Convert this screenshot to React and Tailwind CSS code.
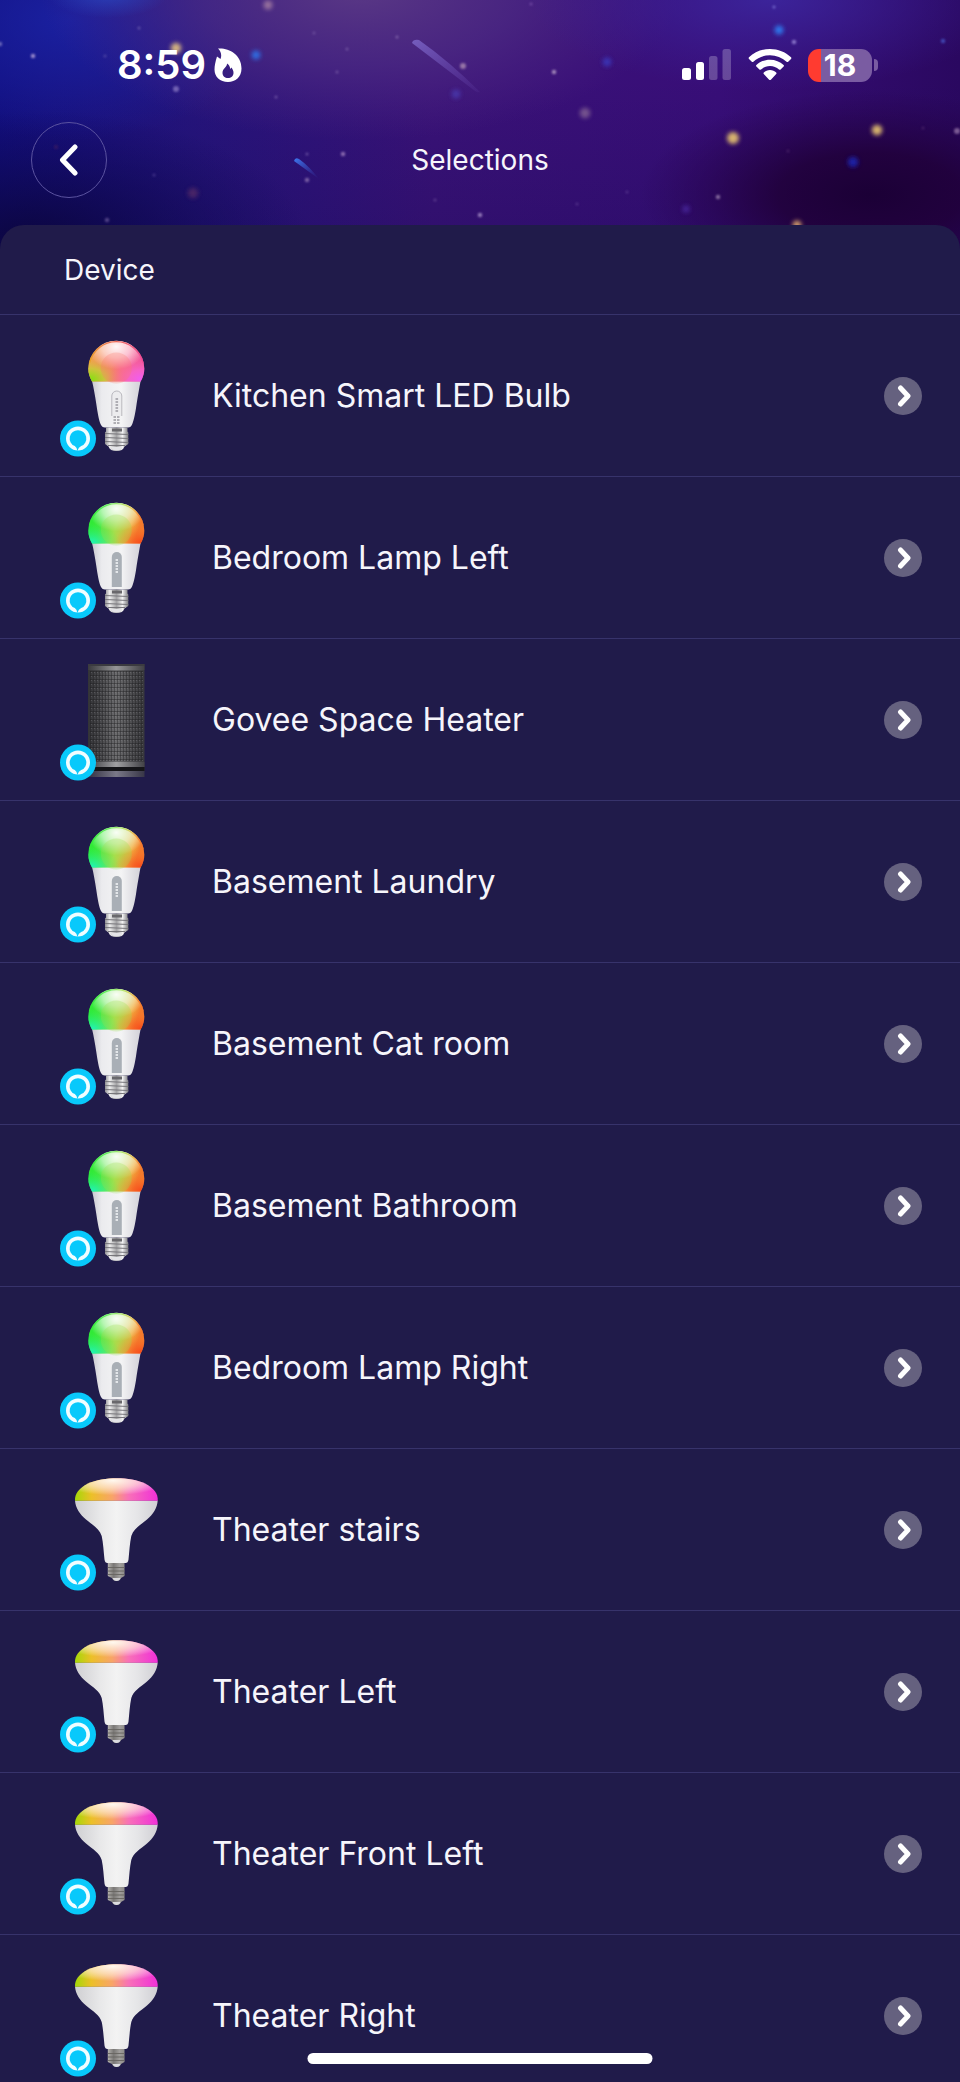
import React from "react";

const devices = [
  { name: "Kitchen Smart LED Bulb", kind: "pink" },
  { name: "Bedroom Lamp Left", kind: "green" },
  { name: "Govee Space Heater", kind: "heater" },
  { name: "Basement Laundry", kind: "green" },
  { name: "Basement Cat room", kind: "green" },
  { name: "Basement Bathroom", kind: "green" },
  { name: "Bedroom Lamp Right", kind: "green" },
  { name: "Theater stairs", kind: "flood" },
  { name: "Theater Left", kind: "flood" },
  { name: "Theater Front Left", kind: "flood" },
  { name: "Theater Right", kind: "flood" },
];

// x, y, radius, colour, opacity
const stars = [
  [268, 5, 6, "#c9a0b0", 0.6],
  [176, 48, 7, "#f0cc80", 0.85],
  [256, 55, 6, "#2f72e8", 0.9],
  [33, 56, 3, "#b9a6d8", 0.8],
  [0, 44, 3, "#8a86c8", 0.7],
  [139, 28, 2, "#8f80c0", 0.5],
  [105, 56, 2, "#8f80c0", 0.4],
  [176, 89, 4, "#9080c8", 0.7],
  [276, 97, 2, "#9a80c0", 0.5],
  [314, 33, 2, "#9a80c0", 0.4],
  [397, 37, 2, "#a890c8", 0.5],
  [347, 49, 2, "#a890c8", 0.4],
  [337, 72, 2, "#a890c8", 0.4],
  [463, 66, 4, "#b898b8", 0.7],
  [456, 94, 6, "#4a3ab0", 0.8],
  [343, 154, 3, "#b090c8", 0.7],
  [307, 154, 2, "#8a70b8", 0.6],
  [307, 180, 3, "#9a80b8", 0.7],
  [193, 193, 7, "#5c2f68", 0.7],
  [107, 220, 3, "#7a68a8", 0.6],
  [154, 175, 2, "#6a58a8", 0.5],
  [56, 147, 3, "#4a2060", 0.5],
  [435, 200, 2, "#8060a8", 0.5],
  [480, 215, 3, "#a890c8", 0.8],
  [554, 72, 3, "#b8a0c8", 0.8],
  [607, 62, 6, "#3a3ac0", 0.8],
  [531, 4, 2, "#8a60b8", 0.6],
  [585, 113, 7, "#8f7098", 0.7],
  [733, 138, 8, "#e0bc70", 0.95],
  [779, 30, 6, "#2f7cf0", 0.95],
  [774, 7, 2, "#8078d8", 0.8],
  [794, 42, 3, "#9a88d8", 0.8],
  [943, 41, 3, "#4a60d0", 0.7],
  [877, 130, 7, "#e0bc70", 0.95],
  [853, 162, 7, "#1d24a8", 0.95],
  [718, 197, 3, "#a890b8", 0.7],
  [686, 209, 5, "#4a28a0", 0.8],
  [797, 225, 6, "#e0a870", 0.9],
  [957, 131, 4, "#a080b0", 0.7],
  [627, 192, 2, "#7050a0", 0.5],
  [577, 204, 2, "#7050a0", 0.5],
  [788, 151, 2, "#603878", 0.5],
  [923, 128, 2, "#603878", 0.5],
];

function NightSky() {
  return (
    <svg
      className="absolute inset-x-0 top-0 h-[270px] w-full"
      viewBox="0 0 960 270"
      preserveAspectRatio="none"
      aria-hidden="true"
    >
      <defs>
        <linearGradient id="skyBase" x1="0" y1="0" x2="1" y2="0">
          <stop offset="0" stopColor="#120f80" />
          <stop offset="0.2" stopColor="#25147c" />
          <stop offset="0.45" stopColor="#3a1278" />
          <stop offset="0.75" stopColor="#380e78" />
          <stop offset="1" stopColor="#2a0860" />
        </linearGradient>
        <linearGradient id="skyShade" x1="0" y1="0" x2="0" y2="1">
          <stop offset="0.3" stopColor="#12084c" stopOpacity="0" />
          <stop offset="1" stopColor="#12084c" stopOpacity="0.3" />
        </linearGradient>
        <radialGradient id="skyBlue">
          <stop offset="0" stopColor="#1a22a4" stopOpacity="0.9" />
          <stop offset="1" stopColor="#1a22a0" stopOpacity="0" />
        </radialGradient>
        <radialGradient id="skyAzure">
          <stop offset="0" stopColor="#2a4cc8" stopOpacity="0.7" />
          <stop offset="1" stopColor="#2a4cc8" stopOpacity="0" />
        </radialGradient>
        <radialGradient id="skyMauve">
          <stop offset="0" stopColor="#5c3a86" stopOpacity="0.95" />
          <stop offset="0.5" stopColor="#4e2c84" stopOpacity="0.7" />
          <stop offset="1" stopColor="#4c2480" stopOpacity="0" />
        </radialGradient>
        <radialGradient id="skyIndigo">
          <stop offset="0" stopColor="#3c269e" stopOpacity="0.9" />
          <stop offset="1" stopColor="#3a1f98" stopOpacity="0" />
        </radialGradient>
        <radialGradient id="skyDark">
          <stop offset="0" stopColor="#1b0036" />
          <stop offset="0.4" stopColor="#200038" stopOpacity="0.85" />
          <stop offset="1" stopColor="#240046" stopOpacity="0" />
        </radialGradient>
        <radialGradient id="skyNavy">
          <stop offset="0" stopColor="#0c0640" />
          <stop offset="1" stopColor="#0c0650" stopOpacity="0" />
        </radialGradient>
        <linearGradient id="comet" x1="0" y1="0" x2="1" y2="1">
          <stop offset="0" stopColor="#7c66c8" stopOpacity="0.85" />
          <stop offset="1" stopColor="#7050b8" stopOpacity="0.1" />
        </linearGradient>
        <linearGradient id="cometBlue" x1="0" y1="0" x2="1" y2="1">
          <stop offset="0" stopColor="#3c78f0" />
          <stop offset="1" stopColor="#3a48b8" stopOpacity="0" />
        </linearGradient>
        <filter id="glow" x="-1.5" y="-1.5" width="4" height="4">
          <feGaussianBlur stdDeviation="2" />
        </filter>
        <filter id="softGlow" x="-1.5" y="-1.5" width="4" height="4">
          <feGaussianBlur stdDeviation="0.9" />
        </filter>
      </defs>
      <rect width="960" height="270" fill="url(#skyBase)" />
      <rect width="960" height="270" fill="url(#skyShade)" />
      <ellipse cx="70" cy="20" rx="200" ry="120" fill="url(#skyBlue)" />
      <ellipse cx="360" cy="-10" rx="320" ry="150" fill="url(#skyMauve)" />
      <ellipse cx="108" cy="-6" rx="60" ry="24" fill="url(#skyAzure)" />
      <ellipse cx="770" cy="0" rx="240" ry="90" fill="url(#skyIndigo)" />
      <ellipse cx="870" cy="195" rx="230" ry="105" fill="url(#skyDark)" />
      <ellipse cx="30" cy="240" rx="280" ry="130" fill="url(#skyNavy)" />
      {stars.map(([x, y, r, color, opacity]) => (
        <circle
          key={x + "-" + y}
          cx={x}
          cy={y}
          r={r * 0.75}
          fill={color}
          opacity={opacity}
          filter={r > 4 ? "url(#glow)" : "url(#softGlow)"}
        />
      ))}
      <path d="M412 43q1-4 7-3q30 21 61 52q-2 1-5-1z" fill="url(#comet)" />
      <path d="M294 161q1-4 5-2q10 7 20 20z" fill="url(#cometBlue)" />
    </svg>
  );
}

function GradientDefs() {
  return (
    <svg className="absolute size-0" aria-hidden="true">
      <defs>
        <linearGradient id="shell" x1="0" x2="1" y1="0" y2="0">
          <stop offset="0" stopColor="#c9c8d0" />
          <stop offset="0.2" stopColor="#ebebee" />
          <stop offset="0.6" stopColor="#f4f4f5" />
          <stop offset="1" stopColor="#d2d1d8" />
        </linearGradient>
        <linearGradient id="metal" x1="0" x2="1" y1="0" y2="0">
          <stop offset="0" stopColor="#8f8f93" />
          <stop offset="0.2" stopColor="#eeeeee" />
          <stop offset="0.5" stopColor="#a2a2a4" />
          <stop offset="0.75" stopColor="#f2f2f2" />
          <stop offset="1" stopColor="#7c7c80" />
        </linearGradient>
        <linearGradient id="darkMetal" x1="0" x2="1" y1="0" y2="0">
          <stop offset="0" stopColor="#b4b2ae" />
          <stop offset="0.35" stopColor="#7a7876" />
          <stop offset="0.7" stopColor="#a09e9c" />
          <stop offset="1" stopColor="#8f8d8a" />
        </linearGradient>
        <linearGradient id="pinkBase" x1="0" x2="1" y1="0" y2="0.2">
          <stop offset="0" stopColor="#f2b040" />
          <stop offset="0.4" stopColor="#f88068" />
          <stop offset="0.75" stopColor="#f86a94" />
          <stop offset="1" stopColor="#f0559c" />
        </linearGradient>
        <radialGradient id="pinkLime" cx="0.04" cy="0.95" r="0.6">
          <stop offset="0" stopColor="#84e010" />
          <stop offset="0.45" stopColor="#c8cc38" stopOpacity="0.85" />
          <stop offset="1" stopColor="#f0a050" stopOpacity="0" />
        </radialGradient>
        <radialGradient id="pinkViolet" cx="0.95" cy="0.95" r="0.6">
          <stop offset="0" stopColor="#f05cf4" />
          <stop offset="0.4" stopColor="#f864d0" stopOpacity="0.8" />
          <stop offset="1" stopColor="#f86490" stopOpacity="0" />
        </radialGradient>
        <linearGradient id="pinkRim" x1="0" x2="1" y1="0" y2="0">
          <stop offset="0" stopColor="#e8a020" />
          <stop offset="0.5" stopColor="#e83a24" />
          <stop offset="1" stopColor="#f04898" />
        </linearGradient>
        <linearGradient id="greenBase" x1="0" x2="1" y1="0" y2="0.25">
          <stop offset="0" stopColor="#18ec30" />
          <stop offset="0.32" stopColor="#44e83c" />
          <stop offset="0.6" stopColor="#a8e04c" />
          <stop offset="0.85" stopColor="#f0b040" />
          <stop offset="1" stopColor="#f47a2c" />
        </linearGradient>
        <radialGradient id="greenAqua" cx="0.06" cy="1" r="0.5">
          <stop offset="0" stopColor="#20f4c0" />
          <stop offset="1" stopColor="#20f060" stopOpacity="0" />
        </radialGradient>
        <radialGradient id="greenRed" cx="0.94" cy="0.98" r="0.46">
          <stop offset="0" stopColor="#f84a1c" />
          <stop offset="1" stopColor="#f8802c" stopOpacity="0" />
        </radialGradient>
        <radialGradient id="shine" cx="0.5" cy="0.2" r="0.5" fy="0.14">
          <stop offset="0" stopColor="#ffffff" stopOpacity="0.95" />
          <stop offset="0.5" stopColor="#ffffff" stopOpacity="0.6" />
          <stop offset="1" stopColor="#ffffff" stopOpacity="0" />
        </radialGradient>
        <linearGradient id="floodBase" x1="0" x2="1" y1="0" y2="0">
          <stop offset="0" stopColor="#a4d808" />
          <stop offset="0.2" stopColor="#ecc028" />
          <stop offset="0.45" stopColor="#f8a468" />
          <stop offset="0.65" stopColor="#f870b8" />
          <stop offset="1" stopColor="#f030d8" />
        </linearGradient>
        <radialGradient id="floodShine" cx="0.46" cy="0.1" r="0.65">
          <stop offset="0" stopColor="#fff8ee" />
          <stop offset="0.5" stopColor="#fff0e0" stopOpacity="0.65" />
          <stop offset="1" stopColor="#ffffff" stopOpacity="0" />
        </radialGradient>
        <linearGradient id="floodShell" x1="0" x2="1" y1="0" y2="0">
          <stop offset="0" stopColor="#cfcfd2" />
          <stop offset="0.3" stopColor="#e8e8e9" />
          <stop offset="0.5" stopColor="#f3f3f3" />
          <stop offset="0.75" stopColor="#e6e6e8" />
          <stop offset="1" stopColor="#d0cfd4" />
        </linearGradient>
        <linearGradient id="heaterBody" x1="0" x2="1" y1="0" y2="0">
          <stop offset="0" stopColor="#333337" />
          <stop offset="0.2" stopColor="#454548" />
          <stop offset="0.5" stopColor="#6c6c6e" />
          <stop offset="0.8" stopColor="#4a4a4d" />
          <stop offset="1" stopColor="#38383c" />
        </linearGradient>
        <linearGradient id="heaterEdge" x1="0" x2="1" y1="0" y2="0">
          <stop offset="0" stopColor="#3c3c40" />
          <stop offset="0.5" stopColor="#a0a0a2" />
          <stop offset="1" stopColor="#424246" />
        </linearGradient>
        <pattern id="mesh" width="3" height="4" patternUnits="userSpaceOnUse">
          <rect width="1" height="4" fill="#202022" opacity="0.4" />
          <rect width="3" height="1" fill="#1c1c1e" opacity="0.4" />
          <rect x="1" y="1" width="1" height="1" fill="#909092" opacity="0.3" />
        </pattern>
      </defs>
    </svg>
  );
}

const globe = "M92 66.5C89.5 62 88.3 58 88.3 53.7a28 28 0 0 1 56 0C144.3 58 143.1 62 140.6 66.5z";
const dome = "M75 51.8C74.5 45 79 39 88 34.5C104 27.5 130 27.5 145 34.5C154 39 158.3 45 157.7 51.8z";

function Bulb({ pink }) {
  return (
    <g>
      <path d="M92 66H140.6C139.5 72 138 80 136.6 89C135.500 97 134 105 132.300 109Q131 112.500 128 112.500H105Q102 112.500 100.500 109C98.800 105 97.500 97 96.300 89C95 80 93.500 72 92 66z" fill="url(#shell)" />
      <path d={globe} fill={pink ? "url(#pinkBase)" : "url(#greenBase)"} />
      <path d={globe} fill={pink ? "url(#pinkLime)" : "url(#greenAqua)"} />
      <path d={globe} fill={pink ? "url(#pinkViolet)" : "url(#greenRed)"} />
      <path d={globe} fill="url(#shine)" />
      <path
        d="M89.500 48a27.500 27.500 0 0 1 53.600 0"
        fill="none"
        stroke={pink ? "url(#pinkRim)" : "url(#greenBase)"}
        strokeWidth="1.4"
        opacity="0.75"
      />
      <circle cx="116.3" cy="53" r="15.500" fill={pink ? "#fb7a6c" : "#9ce050"} opacity="0.28" />
      {pink ? (
        <g fill="none" stroke="#b9b8be">
          <path d="M111.800 101V81a5 5 0 0 1 10 0v20" strokeWidth="1" fill="#ececee" />
          <path d="M116.800 83v15" strokeWidth="2.6" stroke="#aeadb3" strokeDasharray="2 1" />
          <path d="M113.500 102h6M113.500 105h6M113.500 108h6" strokeWidth="1.4" stroke="#99989e" strokeDasharray="2.500 1" />
        </g>
      ) : (
        <g>
          <path d="M111.800 110V80a5 5 0 0 1 10 0v30z" fill="#a9afb6" />
          <path d="M116.800 82v15" stroke="#e3e6e9" strokeWidth="2.4" strokeDasharray="2 1" />
        </g>
      )}
      <path d="M106 112.500h21.500v4l.8 1v11.500l-3.800 2.500q-1.500 4.500-8 4.500t-8-4.500l-3.500-2.500V117.500l1-1z" fill="url(#metal)" />
      <path d="M112 113.500h10v3h-10z" fill="#69686c" />
      <path d="M105 118.500l23.300 1M105 122.500l23.300 1M105 126.500l23.300 1M108 130.500h17" stroke="#77767b" strokeWidth="1" />
      <path d="M111 132h11q-1 3.500-5.500 3.500T111 132z" fill="#e4e4e8" />
    </g>
  );
}

function Flood() {
  return (
    <g>
      <path d="M75 51.500H157.700C157.200 59 153 65.500 147 70.500C139.500 76.500 133.500 80 131.300 87C129.800 94 129.300 103 128.500 110.500Q128 114 125.500 114H107.500Q105 114 104.500 110.500C103.700 103 103.200 94 101.700 87C99.500 80 93.500 76.500 86 70.500C80 65.500 75.500 59 75 51.500z" fill="url(#floodShell)" />
      <path d={dome} fill="url(#floodBase)" />
      <path d={dome} fill="url(#floodShine)" />
      <path d="M107.800 114h16.700v13l-3.500 2q-1 3-4.500 3t-4.500-3l-4.200-2z" fill="url(#darkMetal)" />
      <path d="M107.800 118.500h16.700M107.800 122h16.700M107.800 125.500h16.700" stroke="#666460" strokeWidth="0.900" />
      <path d="M112.500 129h8q-1 3-4 3t-4-3z" fill="#dcdce0" />
    </g>
  );
}

function Heater() {
  return (
    <g>
      <rect x="88" y="25" width="56.500" height="107" fill="url(#heaterBody)" />
      <rect x="90" y="32" width="53" height="90" fill="url(#mesh)" />
      <rect x="88" y="25" width="56.500" height="2" fill="#3b3b40" />
      <rect x="88" y="27" width="56.500" height="4" fill="url(#heaterEdge)" opacity="0.8" />
      <rect x="88" y="123" width="56.500" height="5" fill="url(#heaterEdge)" />
      <rect x="88" y="128" width="56.500" height="4" fill="#151518" />
      <rect x="88" y="132" width="56.500" height="6" fill="url(#heaterEdge)" opacity="0.7" />
    </g>
  );
}

function DeviceArt({ kind }) {
  return (
    <svg className="h-[122px] w-[100px] shrink-0" viewBox="60 20 100 122" aria-hidden="true">
      {kind === "heater" ? <Heater /> : kind === "flood" ? <Flood /> : <Bulb pink={kind === "pink"} />}
      <circle cx="78" cy="123.500" r="18" fill="#08c9fb" />
      <circle cx="78" cy="123.500" r="12" fill="#f0fdff" />
      <path d="M78 115.300a8.200 8.200 0 0 1 3.200 15.800q-2.600 1.200-3.900 4.800q-.2-3.200-2.500-4.800A8.200 8.200 0 0 1 78 115.300z" fill="#08c9fb" />
    </svg>
  );
}

function StatusBar() {
  return (
    <div className="relative flex h-10 items-center justify-between pr-[82px] pl-[117px] text-white">
      <div className="flex items-center gap-2">
        <span className="text-[40px] leading-10 font-semibold">8:59</span>
        <svg className="h-[34px] w-7" viewBox="0 0 28 34" aria-hidden="true">
          <path
            fill="#fff"
            fillRule="evenodd"
            d="M4 .5C14-.5 27.500 6 27.500 20.500C27.500 29 21.500 34 14 34C6 34 .5 29 .5 21.500C.5 17.500 1.500 13.500 3 8.500L6.500 11C8 7 7 3.500 4 .5zM13 15.500C13.300 19 8.500 20.500 8.500 25C8.500 28 11 30 14 30C17 30 19.500 28 19.500 25C19.500 22.500 18.500 21 17.500 19.500L16.200 21C16 18.500 15 16.500 13 15.500z"
          />
        </svg>
      </div>
      <div className="flex items-center gap-4">
        <svg className="h-[34px] w-[50px]" viewBox="0 0 50 34" aria-hidden="true">
          <rect x="0" y="20" width="9" height="12" rx="2.500" fill="#fff" />
          <rect x="14" y="14" width="8" height="18" rx="2.500" fill="#fff" />
          <rect x="27" y="8" width="8.500" height="24" rx="2.500" fill="#fff" opacity="0.24" />
          <rect x="40.500" y="1" width="8.500" height="31" rx="2.500" fill="#fff" opacity="0.24" />
        </svg>
        <svg className="h-[34px] w-11" viewBox="0 0 44 34" aria-hidden="true">
          <path fill="#fff" d="M22 1C30 1 37.500 4 43 9.300Q43.800 10.100 43 10.900L40.200 13.700Q39.400 14.400 38.600 13.700C34 9.500 28.200 7.300 22 7.300S10 9.500 5.400 13.700Q4.600 14.400 3.800 13.700L1 10.900Q.2 10.100 1 9.300C6.500 4 14 1 22 1z" />
          <path fill="#fff" d="M22 11.700C27.300 11.700 32 13.700 35.600 17Q36.400 17.800 35.600 18.600L32.600 21.500Q31.900 22.200 31 21.500C28.500 19.300 25.500 18 22 18S15.500 19.300 13 21.500Q12.100 22.200 11.400 21.500L8.400 18.600Q7.600 17.800 8.400 17C12 13.700 16.700 11.700 22 11.700z" />
          <path fill="#fff" d="M22 22C24.500 22 26.600 22.900 28.200 24.400Q29 25.200 28.200 26L22.900 31.700Q22 32.500 21.100 31.700L15.800 26Q15 25.200 15.800 24.400C17.400 22.900 19.500 22 22 22z" />
        </svg>
        <div className="flex items-center gap-[2px]">
          <div className="flex h-[33px] w-16 items-center justify-center rounded-[11px] bg-linear-to-r from-[#ff3b30] from-20% to-[#7a5ca2] to-20%">
            <span className="text-[30px] leading-8 font-bold">18</span>
          </div>
          <div className="h-3 w-1 rounded-r-full bg-[#7a5ca2]" />
        </div>
      </div>
    </div>
  );
}

export default function App() {
  return (
    <div className="relative flex h-screen flex-col overflow-hidden bg-[#201b4a] font-['Inter','Noto_Sans',sans-serif] text-[#f6f5fb]">
      <GradientDefs />
      <NightSky />
      <header className="relative pt-[45px] pb-[27px]">
        <StatusBar />
        <div className="mt-[37px] grid grid-cols-[1fr_auto_1fr] items-center px-[31px]">
          <button
            type="button"
            aria-label="Back"
            className="flex size-[76px] items-center justify-center rounded-full border border-[#5b53a0]"
          >
            <svg className="h-8 w-5" viewBox="0 0 20 32" fill="none" stroke="#fff" strokeWidth="5" strokeLinecap="round" strokeLinejoin="round" aria-hidden="true">
              <path d="M16 3L3.500 16L16 29" />
            </svg>
          </button>
          <h1 className="text-[28px] leading-9">Selections</h1>
        </div>
      </header>
      <main className="relative flex min-h-0 flex-1 flex-col rounded-t-[24px] bg-[#201b4a]">
        <h2 className="flex h-[90px] shrink-0 items-center border-b border-[#37336b] px-16 text-[28px] leading-9">Device</h2>
        <ul className="min-h-0 flex-1 overflow-y-auto [scrollbar-width:none]">
          {devices.map((d) => (
            <li key={d.name}>
              <button type="button" className="flex h-[162px] w-full items-center border-b border-[#37336b] pr-[38px] pl-[60px] text-left">
                <DeviceArt kind={d.kind} />
                <span className="ml-[52px] flex-1 text-[32px] leading-10">{d.name}</span>
                <span className="flex size-[38px] items-center justify-center rounded-full bg-[#65617f]">
                  <svg className="h-6 w-4" viewBox="0 0 16 24" fill="none" stroke="#fff" strokeWidth="5" strokeLinecap="round" strokeLinejoin="round" aria-hidden="true">
                    <path d="M5.500 4L13 12L5.500 20" />
                  </svg>
                </span>
              </button>
            </li>
          ))}
        </ul>
      </main>
      <div className="absolute bottom-[18px] left-1/2 h-[11px] w-[345px] -translate-x-1/2 rounded-full bg-white" />
    </div>
  );
}
